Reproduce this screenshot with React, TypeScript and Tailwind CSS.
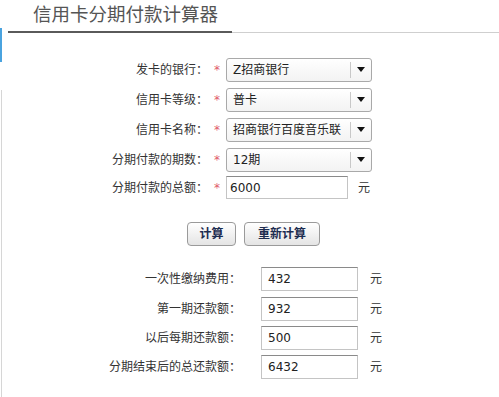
import React from "react";

const cjk = { fontFamily: '"DejaVu Sans", "Noto Sans CJK SC", sans-serif' };

function Select({ value }: { value: string }) {
  return (
    <div className="flex h-[24px] w-[146px] items-center rounded-[3px] border border-[#a9a9a9] bg-gradient-to-b from-white to-[#f3f3f3]">
      <div className="flex-1 overflow-hidden whitespace-nowrap pl-[6px] text-[12px] text-[#222]">{value}</div>
      <div className="h-[16px] w-px bg-[#c8c8c8]" />
      <div className="flex w-[20px] items-center justify-center">
        <svg width="8" height="6" viewBox="0 0 8 6">
          <path d="M0 0H8L4 5Z" fill="#111" />
        </svg>
      </div>
    </div>
  );
}

function Star() {
  return <div className="w-[18px] text-center text-[12px] text-[#e05a6a]">*</div>;
}

function Row({ label, children, mt }: { label: string; children: React.ReactNode; mt: string }) {
  return (
    <div className={`flex items-center ${mt}`}>
      <div className="w-[208px] text-right text-[12px] text-[#333]">{label}</div>
      <Star />
      {children}
    </div>
  );
}

function ResultRow({ label, value, mt }: { label: string; value: string; mt: string }) {
  return (
    <div className={`flex items-center ${mt}`}>
      <div className="w-[241px] text-right text-[12px] text-[#333]">{label}</div>
      <div className="ml-[20px] flex h-[24px] w-[97px] items-center border border-[#c4c4c4] border-t-[#8a8a8a] bg-white pl-[6px] text-[12px] text-[#222]">
        {value}
      </div>
      <div className="ml-[12px] text-[12px] text-[#333]">元</div>
    </div>
  );
}

function Button({ children, w }: { children: React.ReactNode; w: string }) {
  return (
    <div
      className={`flex h-[24px] ${w} items-center justify-center rounded-[4px] border border-[#9a9a9a] bg-gradient-to-b from-white to-[#e4e4e4] text-[12px] font-bold text-[#1c2c50]`}
    >
      {children}
    </div>
  );
}

export default function App() {
  return (
    <div className="flex h-[397px] w-[499px] overflow-hidden bg-white" style={cjk}>
      <div className="flex w-[3px] flex-col">
        <div className="h-[28px]" />
        <div className="h-[34px] w-[2px] bg-[#4aa3df]" />
        <div className="h-[28px]" />
        <div className="ml-px w-px flex-1 bg-[#d6d6d6]" />
      </div>
      <div className="flex flex-1 flex-col">
        <div className="h-[31px] pl-[30px] pt-[3px] text-[18.5px] leading-[24px] text-[#555]">
          信用卡分期付款计算器
        </div>
        <div className="flex items-center">
          <div className="ml-[5px] h-[2px] w-[224px] bg-[#5a5a5a]" />
          <div className="h-px flex-1 bg-[#cfcfcf]" />
        </div>
        <div className="-ml-[3px] flex flex-col">
          <Row label="发卡的银行：" mt="mt-[25px]">
            <Select value="Z招商银行" />
          </Row>
          <Row label="信用卡等级：" mt="mt-[6px]">
            <Select value="普卡" />
          </Row>
          <Row label="信用卡名称：" mt="mt-[6px]">
            <Select value="招商银行百度音乐联" />
          </Row>
          <Row label="分期付款的期数：" mt="mt-[6px]">
            <Select value="12期" />
          </Row>
          <Row label="分期付款的总额：" mt="mt-[4px]">
            <div className="flex h-[23px] w-[122px] items-center border border-[#c4c4c4] border-t-[#8a8a8a] bg-white pl-[3px] text-[12px] text-[#222]">
              6000
            </div>
            <div className="ml-[10px] text-[12px] text-[#333]">元</div>
          </Row>
          <div className="mt-[23px] flex pl-[187px]">
            <Button w="w-[49px]">计算</Button>
            <div className="w-[8px]" />
            <Button w="w-[76px]">重新计算</Button>
          </div>
          <ResultRow label="一次性缴纳费用：" value="432" mt="mt-[21px]" />
          <ResultRow label="第一期还款额：" value="932" mt="mt-[6px]" />
          <ResultRow label="以后每期还款额：" value="500" mt="mt-[5px]" />
          <ResultRow label="分期结束后的总还款额：" value="6432" mt="mt-[5px]" />
        </div>
      </div>
    </div>
  );
}
